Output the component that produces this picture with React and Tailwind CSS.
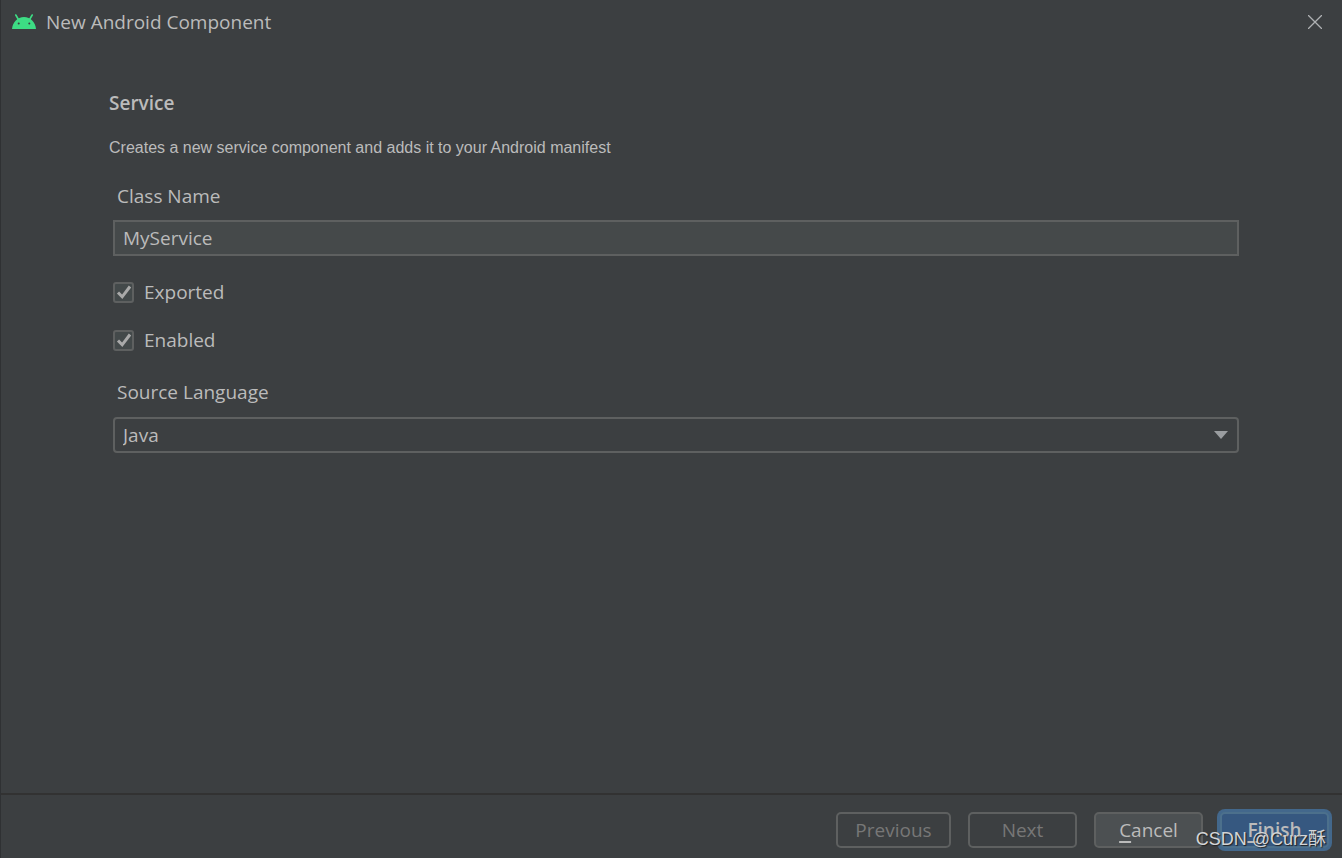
import { useState } from "react";

const AndroidIcon = () => (
  <svg viewBox="0 0 24 16" className="h-4 w-6" aria-hidden="true">
    <path
      d="M3.800 1l3.200 5.500M20.200 1l-3.200 5.500"
      stroke="#3ddc84"
      strokeWidth="1.600"
      strokeLinecap="round"
    />
    <path d="M0 15C.6 8 5.500 3 12 3s11.400 5 12 12z" fill="#3ddc84" />
    <circle cx="6.700" cy="9.500" r="1" fill="#3c3f41" />
    <circle cx="17.300" cy="9.500" r="1" fill="#3c3f41" />
  </svg>
);

const CheckField = ({ id, label, checked, onChange }) => (
  <div className="flex h-7 items-center gap-2.5">
    <div className="grid size-[21px] place-items-center">
      <input
        type="checkbox"
        id={id}
        checked={checked}
        onChange={(e) => onChange(e.target.checked)}
        className="col-start-1 row-start-1 size-[21px] appearance-none rounded-[3px] border-2 border-[#5e6060] bg-[#43494a]"
      />
      {checked && (
        <svg
          viewBox="0 0 21 21"
          className="pointer-events-none col-start-1 row-start-1 size-[21px]"
        >
          <path
            d="M5 10.500l4.200 4.300L17 4.500"
            fill="none"
            stroke="#a9a9a9"
            strokeWidth="3"
          />
        </svg>
      )}
    </div>
    <label htmlFor={id}>{label}</label>
  </div>
);

const App = () => {
  const [className, setClassName] = useState("MyService");
  const [exported, setExported] = useState(true);
  const [enabled, setEnabled] = useState(true);
  const [language, setLanguage] = useState("Java");

  return (
    <div className="relative flex min-h-screen flex-col border-l border-[#2f3133] bg-[#3c3f41] font-['Open_Sans','Noto_Sans_CJK_SC',sans-serif] text-[19px] leading-7 text-[#bbbbbb]">
      {/* title bar */}
      <header className="flex h-[43px] items-center justify-between pr-5 pl-[11px]">
        <div className="flex items-center gap-2.5">
          <AndroidIcon />
          <h1>New Android Component</h1>
        </div>
        <button type="button" aria-label="Close">
          <svg viewBox="0 0 14 14" className="size-3.5">
            <path d="M0 0l14 14M14 0L0 14" stroke="#afb1b3" strokeWidth="1.300" />
          </svg>
        </button>
      </header>

      <main className="flex-1 pt-[46px] pr-[103px] pl-[108px]">
        <h2 className="font-semibold">Service</h2>
        <p className="mt-[17px] font-['Liberation_Sans',sans-serif] text-base leading-7">
          Creates a new service component and adds it to your Android manifest
        </p>
        <form className="mt-5 flex flex-col pl-1">
          <label htmlFor="class-name" className="pl-1">
            Class Name
          </label>
          <input
            id="class-name"
            type="text"
            value={className}
            onChange={(e) => setClassName(e.target.value)}
            className="mt-2.5 h-9 w-full border-2 border-[#5e6060] bg-[#45494a] px-2 outline-none"
          />
          <div className="mt-[22px] flex flex-col gap-5">
            <CheckField
              id="exported"
              label="Exported"
              checked={exported}
              onChange={setExported}
            />
            <CheckField
              id="enabled"
              label="Enabled"
              checked={enabled}
              onChange={setEnabled}
            />
          </div>
          <label htmlFor="language" className="mt-6 pl-1">
            Source Language
          </label>
          <div className="mt-[11px] grid items-center">
            <select
              id="language"
              value={language}
              onChange={(e) => setLanguage(e.target.value)}
              className="col-start-1 row-start-1 h-9 w-full appearance-none rounded-[4px] border-2 border-[#5e6060] bg-[#3c3f41] px-2 outline-none"
            >
              <option>Java</option>
              <option>Kotlin</option>
            </select>
            <svg
              viewBox="0 0 14 8"
              className="pointer-events-none col-start-1 row-start-1 mr-[11px] h-2 w-3.5 justify-self-end"
            >
              <path d="M0 0h14L7 8z" fill="#9a9da0" />
            </svg>
          </div>
        </form>
      </main>

      <footer className="flex h-[65px] items-center justify-end gap-[17px] border-t-2 border-[#323232] pt-1.5 pr-[13px]">
        <button
          type="button"
          disabled
          className="h-9 w-[115px] rounded-[5px] border-2 border-[#5e6060] text-[#777777]"
        >
          Previous
        </button>
        <button
          type="button"
          disabled
          className="h-9 w-[109px] rounded-[5px] border-2 border-[#5e6060] text-[#777777]"
        >
          Next
        </button>
        <button
          type="button"
          className="h-9 w-[109px] rounded-[5px] border-2 border-[#5e6060] bg-[#4c5052]"
        >
          <span className="underline decoration-2 underline-offset-4">C</span>
          ancel
        </button>
        <button
          type="button"
          className="h-9 w-[109px] rounded-[5px] border-2 border-[#4c708c] bg-[#365880] font-semibold ring-3 ring-[#43688c]"
        >
          <span className="underline decoration-2 underline-offset-4">F</span>
          inish
        </button>
      </footer>

      <span className="pointer-events-none absolute right-4 bottom-[5px] font-['Liberation_Sans','Noto_Sans_CJK_SC',sans-serif] text-lg leading-7 text-[#d4d5d6] text-shadow-[1px_1px_1px_#222222]">
        CSDN @Curz酥
      </span>
    </div>
  );
};

export default App;
